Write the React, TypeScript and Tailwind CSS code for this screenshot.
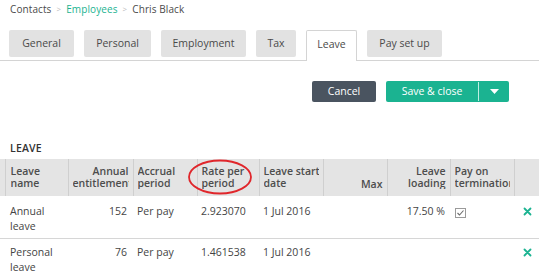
import React from "react";

const tabs = [
  { label: "General", w: "w-[65px]" },
  { label: "Personal", w: "w-[67px]" },
  { label: "Employment", w: "w-[85px]" },
  { label: "Tax", w: "w-[40px]" },
  { label: "Leave", w: "w-[51px]", active: true },
  { label: "Pay set up", w: "w-[75px]" },
];

function CheckIcon() {
  return (
    <svg width="11" height="10" viewBox="0 0 11 10" className="inline-block">
      <rect x="0.5" y="0.5" width="10" height="9" fill="#fff" stroke="#9a9a9a" />
      <path d="M2.5 5 L4.5 7 L8.5 2.5" fill="none" stroke="#6b6b6b" strokeWidth="1.1" />
    </svg>
  );
}

function XIcon() {
  return (
    <svg width="9" height="9" viewBox="0 0 9 9" className="inline-block">
      <path d="M1.5 1.5 L7.5 7.5 M7.5 1.5 L1.5 7.5" stroke="#1bb391" strokeWidth="1.8" strokeLinecap="round" />
    </svg>
  );
}

export default function App() {
  return (
    <div
      className="w-[539px] h-[273px] overflow-hidden bg-white text-[#3d3d3d] relative"
      style={{ fontFamily: '"Open Sans", "Liberation Sans", sans-serif' }}
    >
      {/* breadcrumb */}
      <div className="flex items-center h-[18px] pl-[10px] text-[10px] leading-none tracking-[0.1px]">
        <span className="text-[#4a4a4a]">Contacts</span>
        <span className="mx-[5px] text-[#bbbbbb] text-[8px]">&gt;</span>
        <span className="text-[#1bb391]">Employees</span>
        <span className="mx-[5px] text-[#bbbbbb] text-[8px]">&gt;</span>
        <span className="text-[#4a4a4a]">Chris Black</span>
      </div>

      {/* tabs */}
      <div className="mt-[12px] flex items-start gap-[10px] pl-[9px] border-b border-[#d4d4d4] h-[31px]">
        {tabs.map((t) =>
          t.active ? (
            <div
              key={t.label}
              className={`${t.w} h-[31px] -mb-px bg-white border border-b-0 border-[#d4d4d4] rounded-t-[2px] flex items-center justify-center text-[10.5px] text-[#4a4a4a] pb-[3px]`}
            >
              {t.label}
            </div>
          ) : (
            <div
              key={t.label}
              className={`${t.w} h-[27px] bg-[#e2e2e2] rounded-[2px] flex items-center justify-center text-[10.5px] text-[#4a4a4a]`}
            >
              {t.label}
            </div>
          )
        )}
      </div>

      {/* buttons */}
      <div className="flex justify-end pr-[30px] mt-[20px] gap-[10px]">
        <button className="w-[64px] h-[21px] bg-[#4a5460] rounded-[2px] text-white text-[10.5px] flex items-center justify-center">
          Cancel
        </button>
        <div className="flex h-[21px] bg-[#1bb391] rounded-[2px] text-white text-[10.5px]">
          <div className="w-[92px] flex items-center justify-center">Save &amp; close</div>
          <div className="w-px bg-[#bfeee2] my-[1px]" />
          <div className="w-[30px] flex items-center justify-center">
            <svg width="9" height="5" viewBox="0 0 9 5">
              <path d="M0 0 L9 0 L4.5 5 Z" fill="#fff" />
            </svg>
          </div>
        </div>
      </div>

      {/* heading */}
      <div className="mt-[41px] pl-[10px] text-[10.5px] font-semibold leading-none text-[#333] tracking-[0.2px]">
        LEAVE
      </div>

      {/* table */}
      <table className="mt-[5px] table-fixed border-collapse text-[10.5px] leading-[12px] w-[560px]">
        <colgroup>
          <col className="w-[5px]" />
          <col className="w-[63px]" />
          <col className="w-[65px]" />
          <col className="w-[64px]" />
          <col className="w-[62px]" />
          <col className="w-[64px]" />
          <col className="w-[64px]" />
          <col className="w-[63px]" />
          <col className="w-[64px]" />
          <col className="w-[46px]" />
        </colgroup>
        <thead>
          <tr className="bg-[#e4e4e4] h-[37px] text-[#4d4d4d]">
            <th className="border-r border-[#cfcfcf] p-0"></th>
            <th className="border-r border-[#cfcfcf] px-[5px] text-left font-semibold align-middle">
              <div className="overflow-hidden">Leave<br />name</div>
            </th>
            <th className="border-r border-[#cfcfcf] px-[4px] text-right font-semibold align-middle">
              <div className="overflow-hidden whitespace-nowrap">Annual<br />entitlement</div>
            </th>
            <th className="border-r border-[#cfcfcf] px-[4px] text-left font-semibold align-middle">
              <div className="overflow-hidden">Accrual<br />period</div>
            </th>
            <th className="border-r border-[#cfcfcf] px-[4px] text-left font-semibold align-middle">
              <div className="overflow-hidden">Rate per<br />period</div>
            </th>
            <th className="border-r border-[#cfcfcf] px-[4px] text-left font-semibold align-middle">
              <div className="overflow-hidden whitespace-nowrap">Leave start<br />date</div>
            </th>
            <th className="border-r border-[#cfcfcf] px-[4px] text-right font-semibold align-bottom pb-[6px]">
              Max
            </th>
            <th className="border-r border-[#cfcfcf] px-[4px] text-right font-semibold align-middle">
              <div className="overflow-hidden">Leave<br />loading</div>
            </th>
            <th className="border-r border-[#cfcfcf] px-[4px] text-left font-semibold align-middle">
              <div className="overflow-hidden whitespace-nowrap">Pay on<br />termination</div>
            </th>
            <th className="p-0"></th>
          </tr>
        </thead>
        <tbody className="text-[#444] leading-[15px]">
          <tr className="border-b border-[#d6d6d6] h-[39px]">
            <td></td>
            <td className="px-[5px] pt-[8px] pb-[4px] align-top">Annual<br />leave</td>
            <td className="px-[6px] pt-[8px] align-top text-right">152</td>
            <td className="px-[4px] pt-[8px] align-top">Per pay</td>
            <td className="px-[4px] pt-[8px] align-top">2.923070</td>
            <td className="px-[4px] pt-[8px] align-top whitespace-nowrap">1 Jul 2016</td>
            <td className="px-[4px] pt-[8px] align-top"></td>
            <td className="px-[5px] pt-[8px] align-top text-right whitespace-nowrap">17.50 %</td>
            <td className="px-[5px] pt-[8px] align-top"><span className="relative top-[1px]"><CheckIcon /></span></td>
            <td className="pt-[8px] align-top pl-[9px]"><XIcon /></td>
          </tr>
          <tr className="h-[36px]">
            <td></td>
            <td className="px-[5px] pt-[6px] align-top">Personal<br />leave</td>
            <td className="px-[6px] pt-[6px] align-top text-right">76</td>
            <td className="px-[4px] pt-[6px] align-top">Per pay</td>
            <td className="px-[4px] pt-[6px] align-top">1.461538</td>
            <td className="px-[4px] pt-[6px] align-top whitespace-nowrap">1 Jul 2016</td>
            <td></td>
            <td></td>
            <td></td>
            <td className="pt-[6px] align-top pl-[9px]"><XIcon /></td>
          </tr>
        </tbody>
      </table>

      {/* red annotation ellipse */}
      <svg className="absolute left-[186px] top-[158px]" width="70" height="40" viewBox="0 0 70 40">
        <ellipse cx="34" cy="19" rx="31" ry="16.5" fill="none" stroke="#e0262b" strokeWidth="1.8" />
      </svg>
    </div>
  );
}
